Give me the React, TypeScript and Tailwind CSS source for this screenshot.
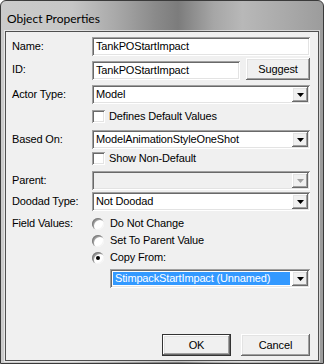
import React from "react";

const sunken =
  "shadow-[inset_1px_1px_0_#a0a0a0,inset_-1px_-1px_0_#ffffff,inset_2px_2px_0_#696969,inset_-2px_-2px_0_#e3e3e3]";
const raised =
  "shadow-[inset_-1px_-1px_0_#696969,inset_1px_1px_0_#ffffff,inset_-2px_-2px_0_#a0a0a0,inset_2px_2px_0_#e3e3e3]";

function Arrow({ disabled }: { disabled?: boolean }) {
  return (
    <div className={`w-[16px] h-full ${raised} bg-[#f0f0f0] flex items-center justify-center`}>
      <svg width="7" height="4" viewBox="0 0 7 4">
        <polygon points="0,0 7,0 3.5,4" fill={disabled ? "#a0a0a0" : "#000"} />
      </svg>
    </div>
  );
}

function Combo({ text, disabled }: { text?: string; disabled?: boolean }) {
  return (
    <div className={`h-[19px] w-[218px] ${sunken} ${disabled ? "bg-[#f0f0f0]" : "bg-white"} p-[2px] flex`}>
      <div className="flex-1 flex items-center pl-[2px] leading-none whitespace-nowrap">{text}</div>
      <Arrow disabled={disabled} />
    </div>
  );
}

function Input({ text, w }: { text: string; w: string }) {
  return (
    <div className={`h-[19px] ${w} ${sunken} bg-white flex items-center pl-[4px] leading-none whitespace-nowrap`}>
      {text}
    </div>
  );
}

function Check({ label }: { label: string }) {
  return (
    <div className="h-[13px] flex items-center">
      <div className={`w-[13px] h-[13px] ${sunken} bg-white`} />
      <span className="ml-[4px] leading-none">{label}</span>
    </div>
  );
}

function Radio({ label, checked }: { label: string; checked?: boolean }) {
  return (
    <div className="h-[13px] flex items-center">
      <div className="w-[12px] h-[12px] rounded-full bg-white shadow-[inset_1px_1px_0_#808080,inset_-1px_-1px_0_#f4f4f4,inset_2px_2px_0_#a0a0a0] flex items-center justify-center">
        {checked && <div className="w-[4px] h-[4px] rounded-full bg-black" />}
      </div>
      <span className="ml-[6px] leading-none">{label}</span>
    </div>
  );
}

function Row({ label, children, mt }: { label?: string; children: React.ReactNode; mt: string }) {
  return (
    <div className={`flex items-center ${mt}`}>
      <div className="w-[80px] leading-none whitespace-nowrap">{label}</div>
      {children}
    </div>
  );
}

export default function App() {
  return (
    <div className="w-[324px] h-[364px] overflow-hidden">
      <div className="w-[324px] h-[364px] rounded-t-[6px] border border-[#3a3a3a] bg-[linear-gradient(90deg,#cbcbcb_0%,#c6c6c6_22%,#a8a8a8_36%,#8a8a8a_48%,#7c7c7c_55%,#a6a6a6_66%,#b8b8b8_75%,#aaaaaa_88%,#9c9c9c_100%)] flex flex-col">
        <div className="h-[30px] shrink-0 flex items-center pl-[6px] pt-[5px] font-['Lato',sans-serif] text-[12px] text-black">
          Object Properties
        </div>
        <div className="ml-[4px] mr-[4px] mb-[2px] flex-1 border border-[#4f4f4f] shadow-[0_0_0_1px_rgba(255,255,255,0.55)] bg-[#f0f0f0] flex flex-col pl-[6px] font-['Liberation_Sans',Arial,sans-serif] text-[11px] text-black tracking-[-0.15px]">
          <Row label="Name:" mt="mt-[5px]">
            <Input text="TankPOStartImpact" w="w-[218px]" />
          </Row>
          <div className="flex items-start mt-[2px]">
            <div className="w-[80px] h-[22px] flex items-center leading-none">ID:</div>
            <div className="mt-[3px]">
              <Input text="TankPOStartImpact" w="w-[148px]" />
            </div>
            <div className={`ml-[6px] w-[64px] h-[22px] ${raised} bg-[#f0f0f0] flex items-center justify-center leading-none`}>
              Suggest
            </div>
          </div>
          <Row label="Actor Type:" mt="mt-[5px]">
            <Combo text="Model" />
          </Row>
          <Row mt="mt-[6px]">
            <Check label="Defines Default Values" />
          </Row>
          <Row label="Based On:" mt="mt-[7px]">
            <Combo text="ModelAnimationStyleOneShot" />
          </Row>
          <Row mt="mt-[3px]">
            <Check label="Show Non-Default" />
          </Row>
          <Row label="Parent:" mt="mt-[6px]">
            <Combo disabled />
          </Row>
          <Row label="Doodad Type:" mt="mt-[2px]">
            <Combo text="Not Doodad" />
          </Row>
          <Row label="Field Values:" mt="mt-[6px]">
            <Radio label="Do Not Change" />
          </Row>
          <Row mt="mt-[4px]">
            <Radio label="Set To Parent Value" />
          </Row>
          <Row mt="mt-[4px]">
            <Radio label="Copy From:" checked />
          </Row>
          <div className="flex mt-[5px] pl-[98px]">
            <div className={`h-[19px] w-[200px] ${sunken} bg-white p-[2px] flex`}>
              <div className="flex-1 p-[1px] pr-[2px]">
                <div className="h-full bg-[#3399ff] text-white flex items-center pl-[2px] leading-none whitespace-nowrap">
                  StimpackStartImpact (Unnamed)
                </div>
              </div>
              <Arrow />
            </div>
          </div>
          <div className="flex mt-auto mb-[4px] pl-[150px]">
            <div className="w-[69px] h-[22px] border border-[#333] bg-[#f0f0f0] flex">
              <div className={`flex-1 ${raised} flex items-center justify-center leading-none`}>OK</div>
            </div>
            <div className={`ml-[10px] w-[69px] h-[22px] ${raised} bg-[#f0f0f0] flex items-center justify-center leading-none`}>
              Cancel
            </div>
          </div>
        </div>
      </div>
    </div>
  );
}
